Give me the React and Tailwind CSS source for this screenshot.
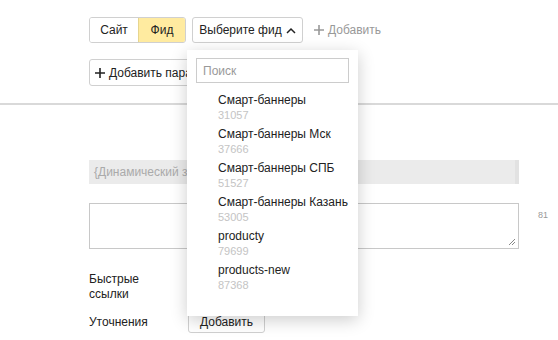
const feeds = [
  { name: 'Смарт-баннеры', id: '31057' },
  { name: 'Смарт-баннеры Мск', id: '37666' },
  { name: 'Смарт-баннеры СПБ', id: '51527' },
  { name: 'Смарт-баннеры Казань', id: '53005' },
  { name: 'producty', id: '79699' },
  { name: 'products-new', id: '87368' },
]

function Chevron() {
  return (
    <svg width="10" height="7" viewBox="0 0 10 7" className="ml-1 shrink-0">
      <path d="M1 6 L5 2 L9 6" fill="none" stroke="#222" strokeWidth="1.5" />
    </svg>
  )
}

function Plus({ color = '#222' }) {
  return (
    <svg width="10" height="10" viewBox="0 0 10 10" className="mr-1 shrink-0">
      <path d="M5 0 V10 M0 5 H10" stroke={color} strokeWidth="1.6" />
    </svg>
  )
}

export default function App() {
  return (
    <div className="w-[558px] h-[340px] bg-white overflow-hidden relative text-[12px] text-[#222]" style={{ fontFamily: '"Liberation Sans", Arial, sans-serif' }}>
      <div className="pl-[89px] pt-[17px]">
        <div className="flex items-center h-[26px]">
          <div className="flex h-full border border-[#d0d0d0] rounded-[3px] overflow-hidden">
            <div className="w-[48px] flex items-center justify-center bg-white">Сайт</div>
            <div className="w-[47px] flex items-center justify-center bg-[#ffeba0] border-l border-[#e6d58f]">Фид</div>
          </div>
          <div className="relative ml-[6px] h-full">
            <div className="h-full w-[111px] flex items-center justify-center border border-[#d0d0d0] rounded-[3px] bg-white">
              Выберите фид<Chevron />
            </div>
            <div className="absolute left-[-5px] top-[33px] w-[171px] h-[266px] bg-white z-10 shadow-[0_4px_16px_rgba(0,0,0,0.2)] pt-[8px] px-[9px]">
              <div className="h-[25px] border border-[#ccc] flex items-center px-[6px] text-[#999]">Поиск</div>
              <div className="pl-[22px] pt-[9px]">
                {feeds.map((f) => (
                  <div key={f.id} className="h-[34px] whitespace-nowrap">
                    <div className="leading-[16px]">{f.name}</div>
                    <div className="text-[11px] leading-[14px] text-[#c4c4c4]">{f.id}</div>
                  </div>
                ))}
              </div>
            </div>
          </div>
          <div className="ml-[11px] flex items-center text-[#999]">
            <Plus color="#999" />Добавить
          </div>
        </div>
        <div className="mt-[16px] h-[27px] w-[160px] flex items-center px-[5px] border border-[#d0d0d0] rounded-[3px] whitespace-nowrap overflow-hidden">
          <Plus />Добавить параметры
        </div>
      </div>
      <div className="mt-[17px] h-[2px] bg-[#d9d9d9]" />
      <div className="pl-[89px] pt-[55px]">
        <div className="w-[430px] h-[24px] bg-[#ebebeb] flex items-center px-[5px] text-[#aaa] border-r-4 border-[#e2e2e2]">
          {'{'}Динамический заголовок{'}'}
        </div>
        <div className="flex mt-[19px]">
          <div className="w-[430px] h-[46px] border border-[#c8c8c8] relative">
            <svg width="8" height="8" viewBox="0 0 8 8" className="absolute right-[2px] bottom-[2px]">
              <path d="M1 7 L7 1 M4 7 L7 4" stroke="#888" strokeWidth="1" />
            </svg>
          </div>
          <div className="ml-[19px] mt-[6px] text-[9px] text-[#999]">81</div>
        </div>
        <div className="flex mt-[21px]">
          <div className="w-[99px] leading-[15px] pt-[2px]">Быстрые<br />ссылки</div>
          <div className="w-[77px] h-[26px] border border-[#d0d0d0] rounded-[3px]" />
        </div>
        <div className="flex items-center mt-[8px]">
          <div className="w-[99px]">Уточнения</div>
          <div className="w-[77px] h-[23px] flex items-center justify-center border border-[#d0d0d0] rounded-[3px]">Добавить</div>
        </div>
      </div>
    </div>
  )
}
